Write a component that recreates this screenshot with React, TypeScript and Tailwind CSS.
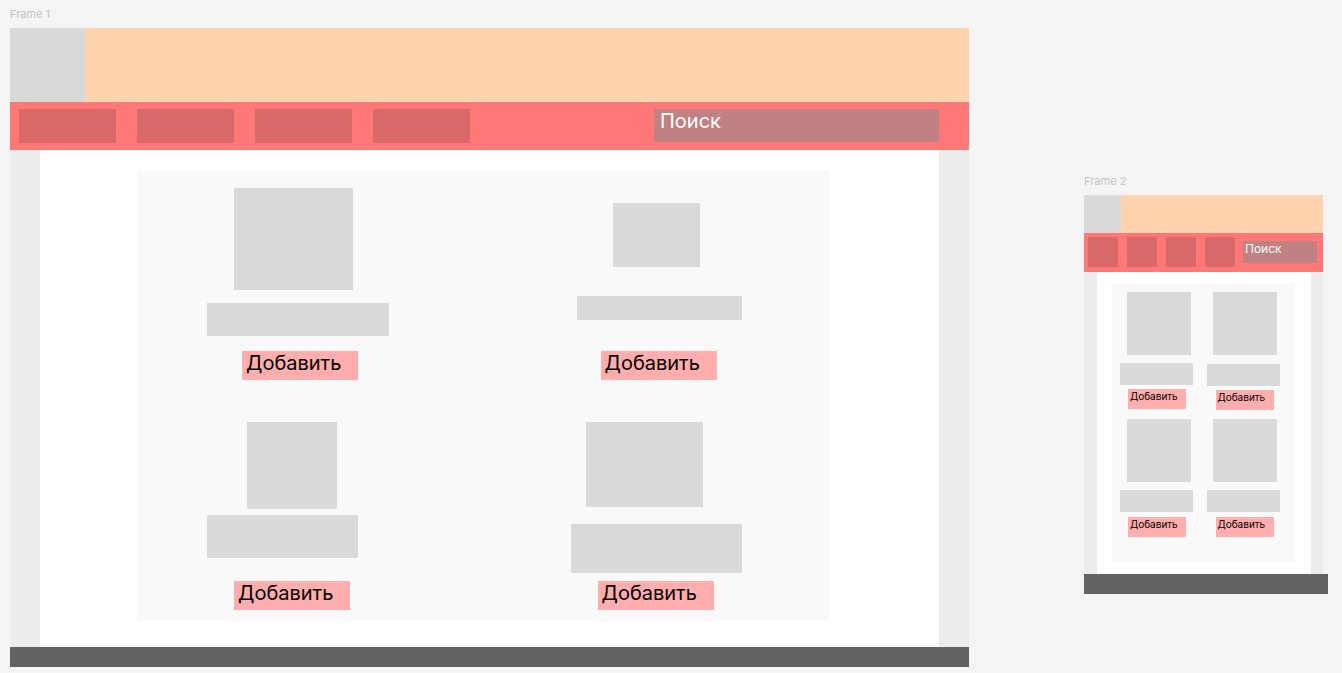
type Card = {
  img: string;
  bar: string;
  btn: string;
};

// Frame 1 cards (desktop)
const bigCards: Card[] = [
  {
    img: "ml-[97px] mt-[18px] h-[102px] w-[119px]",
    bar: "ml-[70px] mt-[13px] h-[33px] w-[182px]",
    btn: "ml-[105px] mt-[15px]",
  },
  {
    img: "ml-[129px] mt-[33px] h-[64px] w-[87px]",
    bar: "ml-[93px] mt-[29px] h-[24px] w-[165px]",
    btn: "ml-[117px] mt-[31px]",
  },
  {
    img: "ml-[110px] mt-[42px] h-[87px] w-[90px]",
    bar: "ml-[70px] mt-[6px] h-[43px] w-[151px]",
    btn: "ml-[97px] mt-[23px]",
  },
  {
    img: "ml-[102px] mt-[42px] h-[85px] w-[117px]",
    bar: "ml-[87px] mt-[17px] h-[49px] w-[171px]",
    btn: "ml-[114px] mt-[8px]",
  },
];

// Frame 2 cards (mobile)
const smallCards: Card[] = [
  { img: "ml-[15px] mt-[9px]", bar: "ml-[8px] mt-[8px]", btn: "ml-[16px] mt-[4px]" },
  { img: "ml-[9px] mt-[9px]", bar: "ml-[3px] mt-[9px]", btn: "ml-[12px] mt-[4px]" },
  { img: "ml-[15px] mt-[9px]", bar: "ml-[8px] mt-[8px]", btn: "ml-[16px] mt-[5px]" },
  { img: "ml-[9px] mt-[9px]", bar: "ml-[3px] mt-[8px]", btn: "ml-[12px] mt-[5px]" },
];

const FrameLabel = ({ text }: { text: string }) => (
  <div className="h-[28px] pt-[7px] text-[11px] leading-[14px] text-[#c4c4c4]">{text}</div>
);

const DesktopFrame = () => (
  <div className="w-[959px]">
    <FrameLabel text="Frame 1" />
    <div className="flex h-[74px]">
      <div className="w-[75px] bg-[#d9d9d9]" />
      <div className="flex-1 bg-[#ffd3ae]" />
    </div>
    <div className="flex h-[48px] items-start bg-[#ff7878] pl-[9px] pr-[30px] pt-[7px]">
      <div className="flex gap-[21px]">
        {[0, 1, 2, 3].map((i) => (
          <div key={i} className="h-[34px] w-[97px] bg-[#d96868]" />
        ))}
      </div>
      <div className="ml-auto h-[33px] w-[285px] bg-[#bf8181] pl-[6px] text-[20px] leading-[24px] text-white">
        Поиск
      </div>
    </div>
    <div className="flex h-[497px]">
      <div className="w-[30px] bg-[#ececec]" />
      <div className="flex-1 bg-white pl-[97px] pt-[20px]">
        <div className="grid h-[451px] w-[693px] grid-cols-2 content-start bg-[#f9f9f9]">
          {bigCards.map((c, i) => (
            <div key={i} className="flex flex-col items-start">
              <div className={`bg-[#d9d9d9] ${c.img}`} />
              <div className={`bg-[#d9d9d9] ${c.bar}`} />
              <div
                className={`h-[29px] w-[116px] bg-[#ffadad] pl-[4px] text-[20px] leading-[24px] text-black ${c.btn}`}
              >
                Добавить
              </div>
            </div>
          ))}
        </div>
      </div>
      <div className="w-[30px] bg-[#ececec]" />
    </div>
    <div className="h-[20px] bg-[#626262]" />
  </div>
);

const MobileFrame = () => (
  <div className="ml-[115px] mt-[167px] w-[244px]">
    <FrameLabel text="Frame 2" />
    <div className="w-[239px]">
      <div className="flex h-[38px]">
        <div className="w-[37px] bg-[#d9d9d9]" />
        <div className="flex-1 bg-[#ffd3ae]" />
      </div>
      <div className="flex h-[39px] items-start bg-[#ff7878] pl-[4px] pt-[4px]">
        <div className="flex gap-[9px]">
          {[0, 1, 2, 3].map((i) => (
            <div key={i} className="h-[30px] w-[30px] bg-[#d96868]" />
          ))}
        </div>
        <div className="ml-[8px] mt-[4px] h-[22px] w-[74px] bg-[#bf8181] pl-[2px] text-[12px] leading-[16px] text-white">
          Поиск
        </div>
      </div>
      <div className="flex h-[302px]">
        <div className="w-[13px] bg-[#ececec]" />
        <div className="flex-1 bg-white pl-[15px] pt-[11px]">
          <div className="grid h-[279px] w-[183px] grid-cols-2 content-start bg-[#f9f9f9]">
            {smallCards.map((c, i) => (
              <div key={i} className="flex flex-col items-start">
                <div className={`h-[63px] w-[64px] bg-[#d9d9d9] ${c.img}`} />
                <div className={`h-[22px] w-[73px] bg-[#d9d9d9] ${c.bar}`} />
                <div
                  className={`h-[20px] w-[58px] bg-[#ffadad] pl-[2px] text-[10px] leading-[14px] text-black ${c.btn}`}
                >
                  Добавить
                </div>
              </div>
            ))}
          </div>
        </div>
        <div className="w-[12px] bg-[#ececec]" />
      </div>
    </div>
    <div className="h-[20px] bg-[#626262]" />
  </div>
);

const App = () => {
  return (
    <div
      className="flex h-[673px] w-[1342px] items-start overflow-hidden bg-[#f4f4f4] pl-[10px]"
      style={{ fontFamily: "Inter, 'Noto Sans', sans-serif" }}
    >
      <DesktopFrame />
      <MobileFrame />
    </div>
  );
};

export default App;
